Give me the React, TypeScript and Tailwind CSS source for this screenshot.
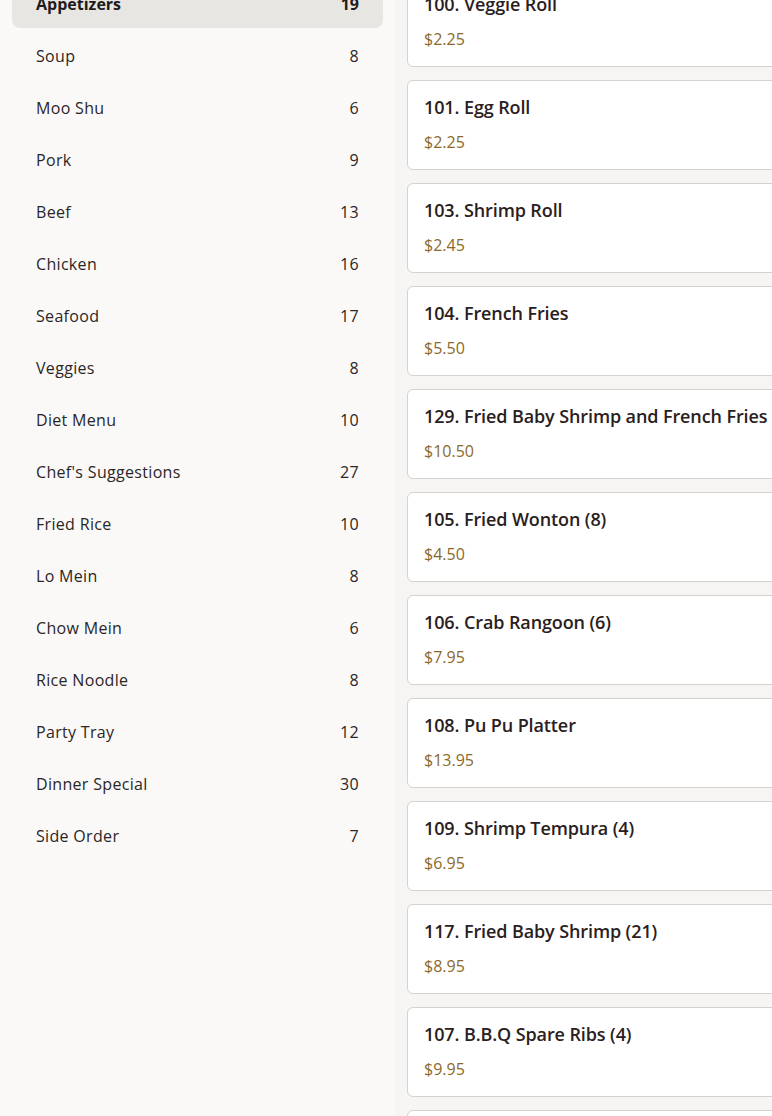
const categories: [string, number][] = [
  ["Appetizers", 19],
  ["Soup", 8],
  ["Moo Shu", 6],
  ["Pork", 9],
  ["Beef", 13],
  ["Chicken", 16],
  ["Seafood", 17],
  ["Veggies", 8],
  ["Diet Menu", 10],
  ["Chef's Suggestions", 27],
  ["Fried Rice", 10],
  ["Lo Mein", 8],
  ["Chow Mein", 6],
  ["Rice Noodle", 8],
  ["Party Tray", 12],
  ["Dinner Special", 30],
  ["Side Order", 7],
]

const items: [string, string][] = [
  ["100. Veggie Roll", "$2.25"],
  ["101. Egg Roll", "$2.25"],
  ["103. Shrimp Roll", "$2.45"],
  ["104. French Fries", "$5.50"],
  ["129. Fried Baby Shrimp and French Fries", "$10.50"],
  ["105. Fried Wonton (8)", "$4.50"],
  ["106. Crab Rangoon (6)", "$7.95"],
  ["108. Pu Pu Platter", "$13.95"],
  ["109. Shrimp Tempura (4)", "$6.95"],
  ["117. Fried Baby Shrimp (21)", "$8.95"],
  ["107. B.B.Q Spare Ribs (4)", "$9.95"],
  ["110. Boneless Spare Ribs", "$10.95"],
]

export default function App() {
  return (
    <div
      className="flex h-[1116px] w-[772px] overflow-hidden bg-[#f6f5f3]"
      style={{ fontFamily: "'Open Sans', 'Noto Sans', sans-serif" }}
    >
      {/* sidebar */}
      <aside className="w-[395px] shrink-0 bg-[#faf9f7] px-3">
        <ul className="-mt-[20px] flex flex-col gap-1">
          {categories.map(([name, count], i) => (
            <li
              key={name}
              className={
                i === 0
                  ? "flex h-12 items-center justify-between rounded-lg bg-[#e8e6e3] px-6 text-base font-bold text-[#1f1b1b]"
                  : "flex h-12 items-center justify-between rounded-lg px-6 text-base tracking-[0.02em] text-[#2b2626]"
              }
            >
              <span>{name}</span>
              <span>{count}</span>
            </li>
          ))}
        </ul>
      </aside>

      {/* menu items */}
      <main className="w-[420px] shrink-0 pl-3">
        <div className="-mt-[23px] flex flex-col gap-[13px]">
          {items.map(([title, price]) => (
            <div key={title} className="rounded-md border border-[#d6d3cf] bg-white px-4 pt-[14px] pb-[15px]">
              <h3 className="text-lg leading-6 font-semibold tracking-[-0.006em] text-[#2a2020]">{title}</h3>
              <p className="mt-[11px] text-base leading-6 text-[#8a6a2c]">{price}</p>
            </div>
          ))}
        </div>
      </main>
    </div>
  )
}
